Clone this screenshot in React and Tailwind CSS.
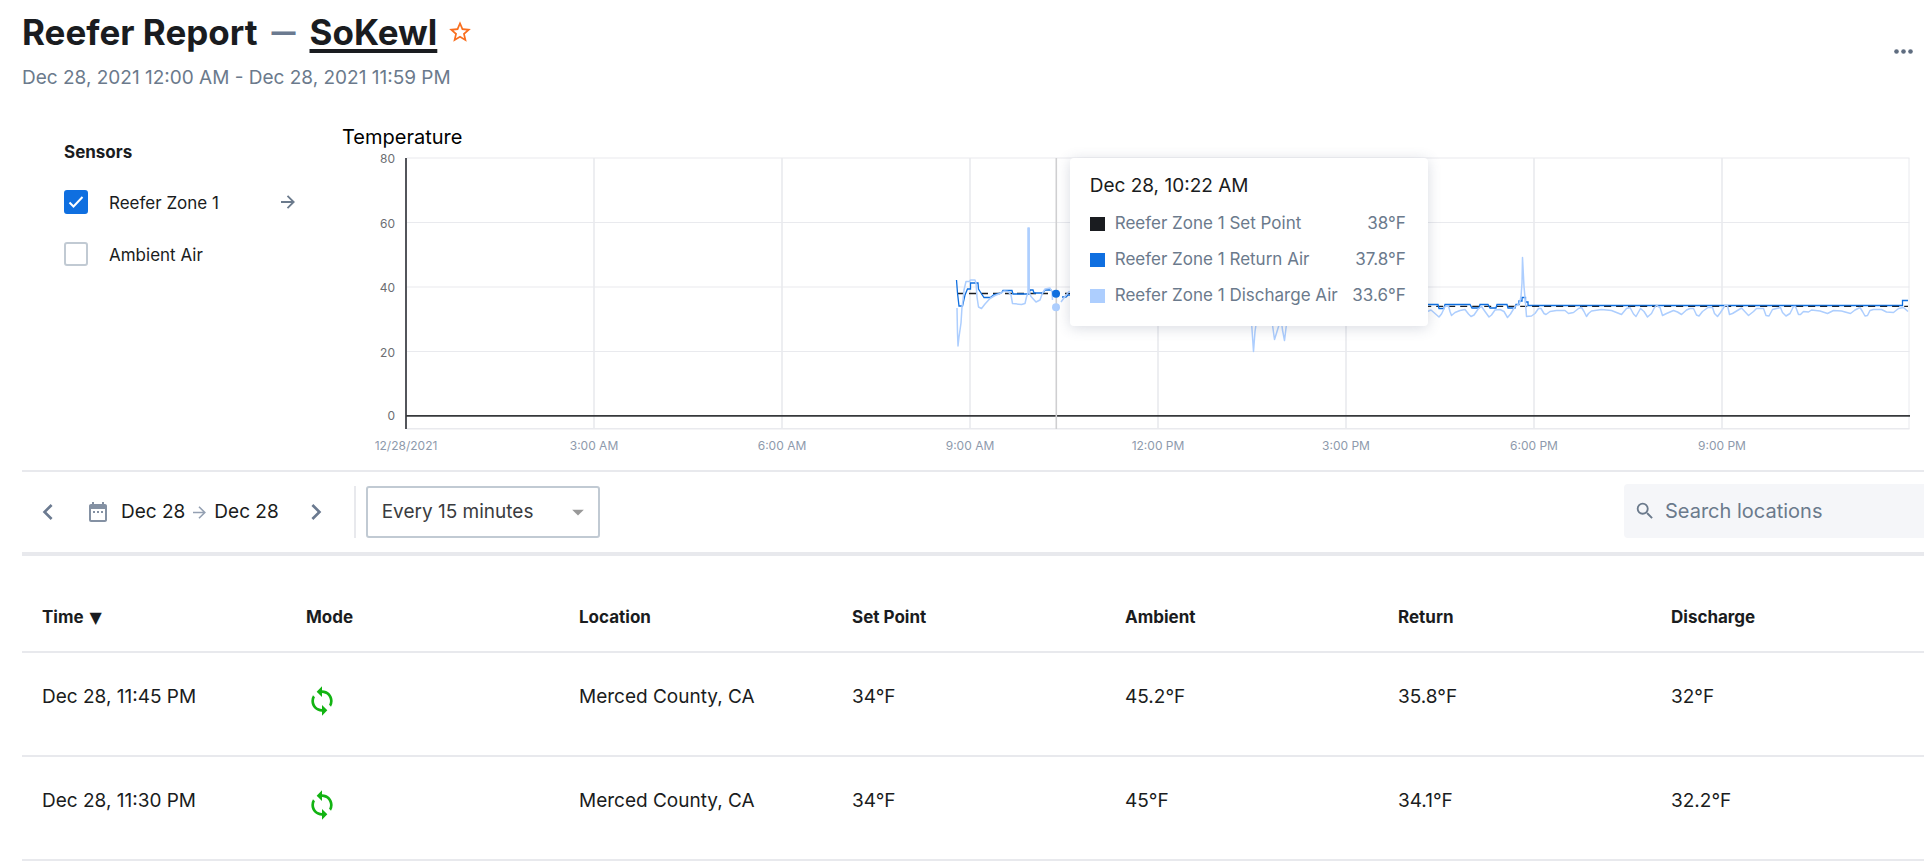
import { MdStarBorder, MdChevronLeft, MdChevronRight, MdDateRange, MdSearch, MdSync, MdArrowDropDown } from "react-icons/md";

const yTicks = [
  { label: "80", y: 158 },
  { label: "60", y: 222.5 },
  { label: "40", y: 287 },
  { label: "20", y: 351.5 },
];

const xTicks = [
  { label: "3:00 AM", x: 594 },
  { label: "6:00 AM", x: 782 },
  { label: "9:00 AM", x: 970 },
  { label: "12:00 PM", x: 1158 },
  { label: "3:00 PM", x: 1346 },
  { label: "6:00 PM", x: 1534 },
  { label: "9:00 PM", x: 1722 },
];

const legend = [
  { name: "Reefer Zone 1 Set Point", value: "38°F", color: "bg-[#1a1c20]" },
  { name: "Reefer Zone 1 Return Air", value: "37.8°F", color: "bg-[#0f6fe0]" },
  { name: "Reefer Zone 1 Discharge Air", value: "33.6°F", color: "bg-[#adcefe]" },
];

const columns = ["Time", "Mode", "Location", "Set Point", "Ambient", "Return", "Discharge"];

const rows = [
  { time: "Dec 28, 11:45 PM", location: "Merced County, CA", setPoint: "34°F", ambient: "45.2°F", ret: "35.8°F", discharge: "32°F" },
  { time: "Dec 28, 11:30 PM", location: "Merced County, CA", setPoint: "34°F", ambient: "45°F", ret: "34.1°F", discharge: "32.2°F" },
];

const returnAir =
  "M956.5 280 L957.5 293 L959 306 H962.5 L965 295 L967.5 289 H970.5 V283 H978 L978.5 289 L981 293 L984 297.5 H990.5 L994 294.5 L1001.5 293 L1003 290.5 H1012 L1013 294 H1029 L1030 290 H1033 L1034 293 H1043 L1045 290 H1051 L1053 293 M1062 297 H1066 L1068 295 H1096 V291 H1120 V295 H1160 V291 H1200 V304.5 H1240 V308 H1290 V304.5 H1438 L1439 308.5 H1444 L1445 304.5 H1470 L1472 308 H1479 L1480 304.5 H1488 L1490 308 H1496 L1497 304.5 H1507 L1508 308 H1515 L1516 304.5 H1519 V301 H1522 V297.5 H1525.5 V302 H1528 V305.5 H1902.5 V300.5 H1908";

const dischargeAir =
  "M957 308 L957.5 333 L958 346 L959 337 L961 323 L962 307 L963 300 L964 290 L966 281.5 H969.5 L970.5 280 H975 L976 283 L977 297 L978.5 307 L981.5 308.5 L985 304 L990 298.5 L995 295.5 L1001.5 293 L1004 291 L1008 291.5 L1011 295 L1012.5 303.5 L1021.5 304.5 L1025 303.5 L1026.5 297 L1028 293 V228 H1029.2 V292 L1031 296.5 L1036 302 L1040 300 L1042.5 293 L1045 289 L1050 288 L1052 292 L1052.5 300 M1061 302 L1065 296.5 L1069 291.5 L1090 303 L1110 294 L1130 306 L1150 295 L1180 308 L1210 300 L1240 312 L1251.5 322 L1253.5 351.5 L1255 331.5 L1257 318 L1268 312 L1272.5 325 L1274.5 339.5 L1277 331.5 L1279 325 L1281 318 L1282.5 330 L1284.5 340.5 L1286.5 324 L1300 312 L1330 309 L1360 314 L1400 309 L1427.5 311.5 L1431 310 L1435 313.5 L1439 317 L1441.5 314 L1445 306.5 L1448.5 306 L1450 311.5 L1451.5 315.5 L1455 312.5 L1460 310.5 L1465 309.5 L1468.5 314 L1471 316.5 L1474 315 L1478.5 308.5 L1481.5 306.5 L1485 311.5 L1489 317 L1491.5 315 L1495 310 L1500 309.5 L1504 311.5 L1507.5 317.5 L1510.5 314 L1515 306.5 L1519.5 303.5 L1521 296.5 L1522 283 L1522.5 257.5 L1524 286.5 L1525.5 303 L1526.5 316.5 L1531.5 316 L1535 313.5 L1538.5 308.5 H1541 L1544 313.5 L1546 314.5 L1550 311.5 L1556.5 310.5 H1565 L1568.5 313.5 L1573.5 312.5 L1578.5 308.5 L1581.5 307.5 L1584 311.5 L1586.5 316.5 L1588.5 313.5 L1591.5 311 L1601.5 309.5 L1611.5 310.5 L1616.5 312.5 L1621.5 314.5 L1626.5 308.5 L1630 307.5 L1633.5 314 L1636 316.5 L1640.5 308.5 L1644 311.5 L1647.5 317 L1651.5 313.5 L1654.5 307.5 L1656.5 305.5 L1660 307.5 L1662.5 315.5 L1666.5 313.5 L1673.5 310.5 L1677.5 312 L1681.5 314.5 L1686.5 310 L1690 308.5 H1693.5 L1696.5 315 L1699 316 L1702.5 311.5 L1708 307.5 H1712.5 L1714.5 313.5 L1717.5 316.5 L1720.5 312.5 L1725 305.5 H1727.5 L1729.5 314.5 L1732.5 313.5 L1741.5 308 L1748.5 315.5 L1753.5 311.5 L1756.5 308.5 H1763.5 L1766 315.5 L1769 316 L1772.5 309.5 L1780.5 307.5 L1782.5 312.5 L1786 316 L1790 313.5 L1793.5 306.5 H1795.5 L1798.5 314.5 H1800.5 L1803.5 311.5 L1808.5 312 L1811.5 310 L1820 311 L1827.5 313.5 L1833.5 310.5 L1841.5 311 L1850.5 313.5 L1855 310 L1860 307.5 L1862.5 311.5 L1865 316 L1867.5 315.5 L1870 310.5 L1873.5 309.5 H1881.5 L1886.5 312 L1893.5 312.5 L1898.5 308.5 L1903.5 307.5 L1908 311.5";

function Header() {
  return (
    <header className="flex items-center justify-between pt-3 pr-[11px]">
      <div>
        <div className="flex items-center gap-2.5">
          <h1 className="flex items-center gap-3.5 text-[35px] leading-10 font-bold text-[#1a1c20]">
            <span>Reefer Report</span>
            <span className="text-2xl font-black text-[#6b7a90]">—</span>
            <a href="#asset" className="underline decoration-4 underline-offset-4">
              SoKewl
            </a>
          </h1>
          <button type="button" aria-label="Add to favorites" className="text-[#f96f1f]">
            <MdStarBorder size={26} />
          </button>
        </div>
        <p className="mt-3.5 text-[19px] leading-6 text-[#6b7a8c]">Dec 28, 2021 12:00 AM - Dec 28, 2021 11:59 PM</p>
      </div>
      <button type="button" aria-label="More options">
        <svg width="19" height="5" viewBox="0 0 19 5" fill="#5f6d80">
          <circle cx="2.5" cy="2.5" r="2.3" />
          <circle cx="9.5" cy="2.5" r="2.3" />
          <circle cx="16.5" cy="2.5" r="2.3" />
        </svg>
      </button>
    </header>
  );
}

function SensorRow({ id, label, checked, arrow }) {
  return (
    <div className="flex h-6 items-center">
      <div className="grid size-6 place-items-center">
        <input
          id={id}
          type="checkbox"
          defaultChecked={checked}
          className="peer col-start-1 row-start-1 size-6 appearance-none rounded-[3px] border-2 border-[#c1cad3] checked:border-[#0f6fe0] checked:bg-[#0f6fe0]"
        />
        <svg
          className="pointer-events-none invisible col-start-1 row-start-1 peer-checked:visible"
          width="16"
          height="14"
          viewBox="0 0 16 14"
          fill="none"
          stroke="#fff"
          strokeWidth="2"
        >
          <path d="M1.5 7.5 L5.5 11.5 L14.5 2" />
        </svg>
      </div>
      <label htmlFor={id} className="ml-[21px] grow pt-1 text-[17px] text-[#1a1c20]">
        {label}
      </label>
      {arrow && (
        <button type="button" aria-label={`Open ${label}`}>
          <svg width="14" height="14" viewBox="0 0 14 14" fill="none" stroke="#6b7a8c" strokeWidth="1.8">
            <path d="M0 7 H12.5 M6.5 0.8 L12.7 7 L6.5 13.2" />
          </svg>
        </button>
      )}
    </div>
  );
}

function Sensors() {
  return (
    <aside className="w-[320px] shrink-0 pt-[50px] pr-[47px] pl-[42px]">
      <h2 className="text-[17px] leading-6 font-bold text-[#1a1c20]">Sensors</h2>
      <div className="mt-[26px] flex flex-col gap-7">
        <SensorRow id="reefer-zone-1" label="Reefer Zone 1" checked arrow />
        <SensorRow id="ambient-air" label="Ambient Air" />
      </div>
    </aside>
  );
}

function Tooltip() {
  return (
    <div className="absolute top-[9px] left-[46%] w-[358px] rounded bg-white pt-4 pr-[22px] pb-3 pl-5 shadow-[0_2px_14px_rgba(60,75,110,0.2)]">
      <p className="text-[19px] leading-6 text-[#1a1c20]">Dec 28, 10:22 AM</p>
      <ul className="mt-2">
        {legend.map((item) => (
          <li key={item.name} className="flex h-9 items-center text-[17px] whitespace-nowrap text-[#6b7a8c]">
            <span className={`mr-2.5 h-[14px] w-[15px] ${item.color}`}></span>
            <span className="grow">{item.name}</span>
            <span>{item.value}</span>
          </li>
        ))}
      </ul>
    </div>
  );
}

function TemperatureChart() {
  return (
    <section className="grow pt-[35px]">
      <h2 className="text-xl leading-6 text-black">Temperature</h2>
      <div className="relative">
        <svg className="block w-full" viewBox="342 149 1582 311" fontSize="12" role="img" aria-label="Temperature over time">
          <g stroke="#e9eaee">
            {yTicks.map((t) => (
              <path key={t.label} d={`M407 ${t.y} H1909.5`} strokeWidth="1.2" />
            ))}
            <path d="M407 428.8 H1909.5" strokeWidth="1.5" />
            <path d="M1909 158 V429" />
            {xTicks.map((t) => (
              <path key={t.label} d={`M${t.x} 158 V429`} strokeWidth="1.6" />
            ))}
          </g>
          <g fill="#6c6e72" textAnchor="end">
            {yTicks.map((t) => (
              <text key={t.label} x="395" y={t.y + 5}>
                {t.label}
              </text>
            ))}
            <text x="395" y="420">
              0
            </text>
          </g>
          <g fill="#8e9aac" textAnchor="middle">
            <text x="406" y="450">
              12/28/2021
            </text>
            {xTicks.map((t) => (
              <text key={t.label} x={t.x} y="450">
                {t.label}
              </text>
            ))}
          </g>
          <path d="M406 158 V429" stroke="#53555b" strokeWidth="2" />
          <path d="M406 415.8 H1910" stroke="#36383b" strokeWidth="1.7" />
          <g fill="none">
            <path d="M957 293.5 H1200 V306.3 H1908" stroke="#1a1c20" strokeWidth="1.3" strokeDasharray="7 5" />
            <path d={returnAir} stroke="#0f6fe0" strokeWidth="1.3" />
            <path d="M1532 306.3 H1902" stroke="#1a1c20" strokeOpacity="0.6" strokeWidth="1.2" strokeDasharray="7 5" />
            <path d={dischargeAir} stroke="#adcefe" strokeWidth="1.5" strokeLinejoin="round" />
            <path d="M1056.3 158 V429" stroke="#cfcfd1" strokeWidth="1.6" />
          </g>
          <circle cx="1056" cy="293.7" r="4" fill="#0f6fe0" />
          <circle cx="1056" cy="307.3" r="4" fill="#adcefe" />
        </svg>
        <Tooltip />
      </div>
    </section>
  );
}

function Toolbar() {
  return (
    <div className="mt-[10px] flex items-end justify-between border-t-2 border-b-4 border-[#e8e9ed] pt-3 pb-3.5">
      <div className="flex h-[52px] items-center pl-[10px]">
        <button type="button" aria-label="Previous day" className="text-[#6b7a90]">
          <MdChevronLeft size={32} />
        </button>
        <button type="button" className="ml-[22px] flex items-center text-[19px] text-[#1a1c20]">
          <MdDateRange size={24} className="mr-[11px] text-[#8491a3]" />
          Dec 28
          <svg className="mx-2" width="13" height="13" viewBox="0 0 13 13" fill="none" stroke="#94a0b2" strokeWidth="1.6">
            <path d="M0 6.5 H11.8 M6 0.8 L11.8 6.5 L6 12.2" />
          </svg>
          Dec 28
        </button>
        <button type="button" aria-label="Next day" className="ml-[21px] text-[#6b7a90]">
          <MdChevronRight size={32} />
        </button>
        <div className="ml-[22px] h-full w-[2px] bg-[#e8e9ed]"></div>
        <div className="ml-[10px] grid items-center">
          <select
            aria-label="Interval"
            className="col-start-1 row-start-1 h-[52px] w-[234px] appearance-none rounded-[3px] border-2 border-[#c1cad3] bg-white pl-[14px] text-[19px] text-[#3a3c40]"
          >
            <option>Every 15 minutes</option>
            <option>Every 30 minutes</option>
            <option>Every hour</option>
          </select>
          <MdArrowDropDown size={28} className="pointer-events-none col-start-1 row-start-1 mr-2 justify-self-end text-[#999]" />
        </div>
      </div>
      <div className="flex h-[54px] w-[300px] items-center rounded-l bg-[#f5f6f9] pl-[10px]">
        <MdSearch size={22} className="shrink-0 text-[#6b7a8c]" />
        <input
          type="search"
          aria-label="Search locations"
          placeholder="Search locations"
          className="ml-[9px] w-full bg-transparent text-xl text-[#1a1c20] outline-none placeholder:text-[#6b7a8c]"
        />
      </div>
    </div>
  );
}

function ReportTable() {
  return (
    <table className="w-full table-fixed text-left text-[#1a1c20]">
      <thead>
        <tr className="border-b-2 border-[#e8e9ed] text-[17px] leading-6">
          {columns.map((name) => (
            <th key={name} className="px-5 pt-[49px] pb-[22px] font-bold first:w-[264px]">
              {name}
              {name === "Time" && <span className="ml-1.5 font-['DejaVu_Sans'] text-base leading-4 font-normal">▼</span>}
            </th>
          ))}
        </tr>
      </thead>
      <tbody>
        {rows.map((row) => (
          <tr key={row.time} className="border-b-2 border-[#e8e9ed] align-top text-[19px] leading-6 whitespace-nowrap">
            <td className="px-5 pt-8">{row.time}</td>
            <td className="px-5 pt-8 pb-[38px]">
              <MdSync size={32} className="text-[#12b312]" role="img" aria-label="Running" />
            </td>
            <td className="px-5 pt-8">{row.location}</td>
            <td className="px-5 pt-8">{row.setPoint}</td>
            <td className="px-5 pt-8">{row.ambient}</td>
            <td className="px-5 pt-8">{row.ret}</td>
            <td className="px-5 pt-8">{row.discharge}</td>
          </tr>
        ))}
      </tbody>
    </table>
  );
}

export default function App() {
  return (
    <main className="min-h-screen overflow-hidden bg-white pl-[22px] font-['Inter','Liberation_Sans',sans-serif]">
      <Header />
      <div className="flex">
        <Sensors />
        <TemperatureChart />
      </div>
      <Toolbar />
      <ReportTable />
    </main>
  );
}
